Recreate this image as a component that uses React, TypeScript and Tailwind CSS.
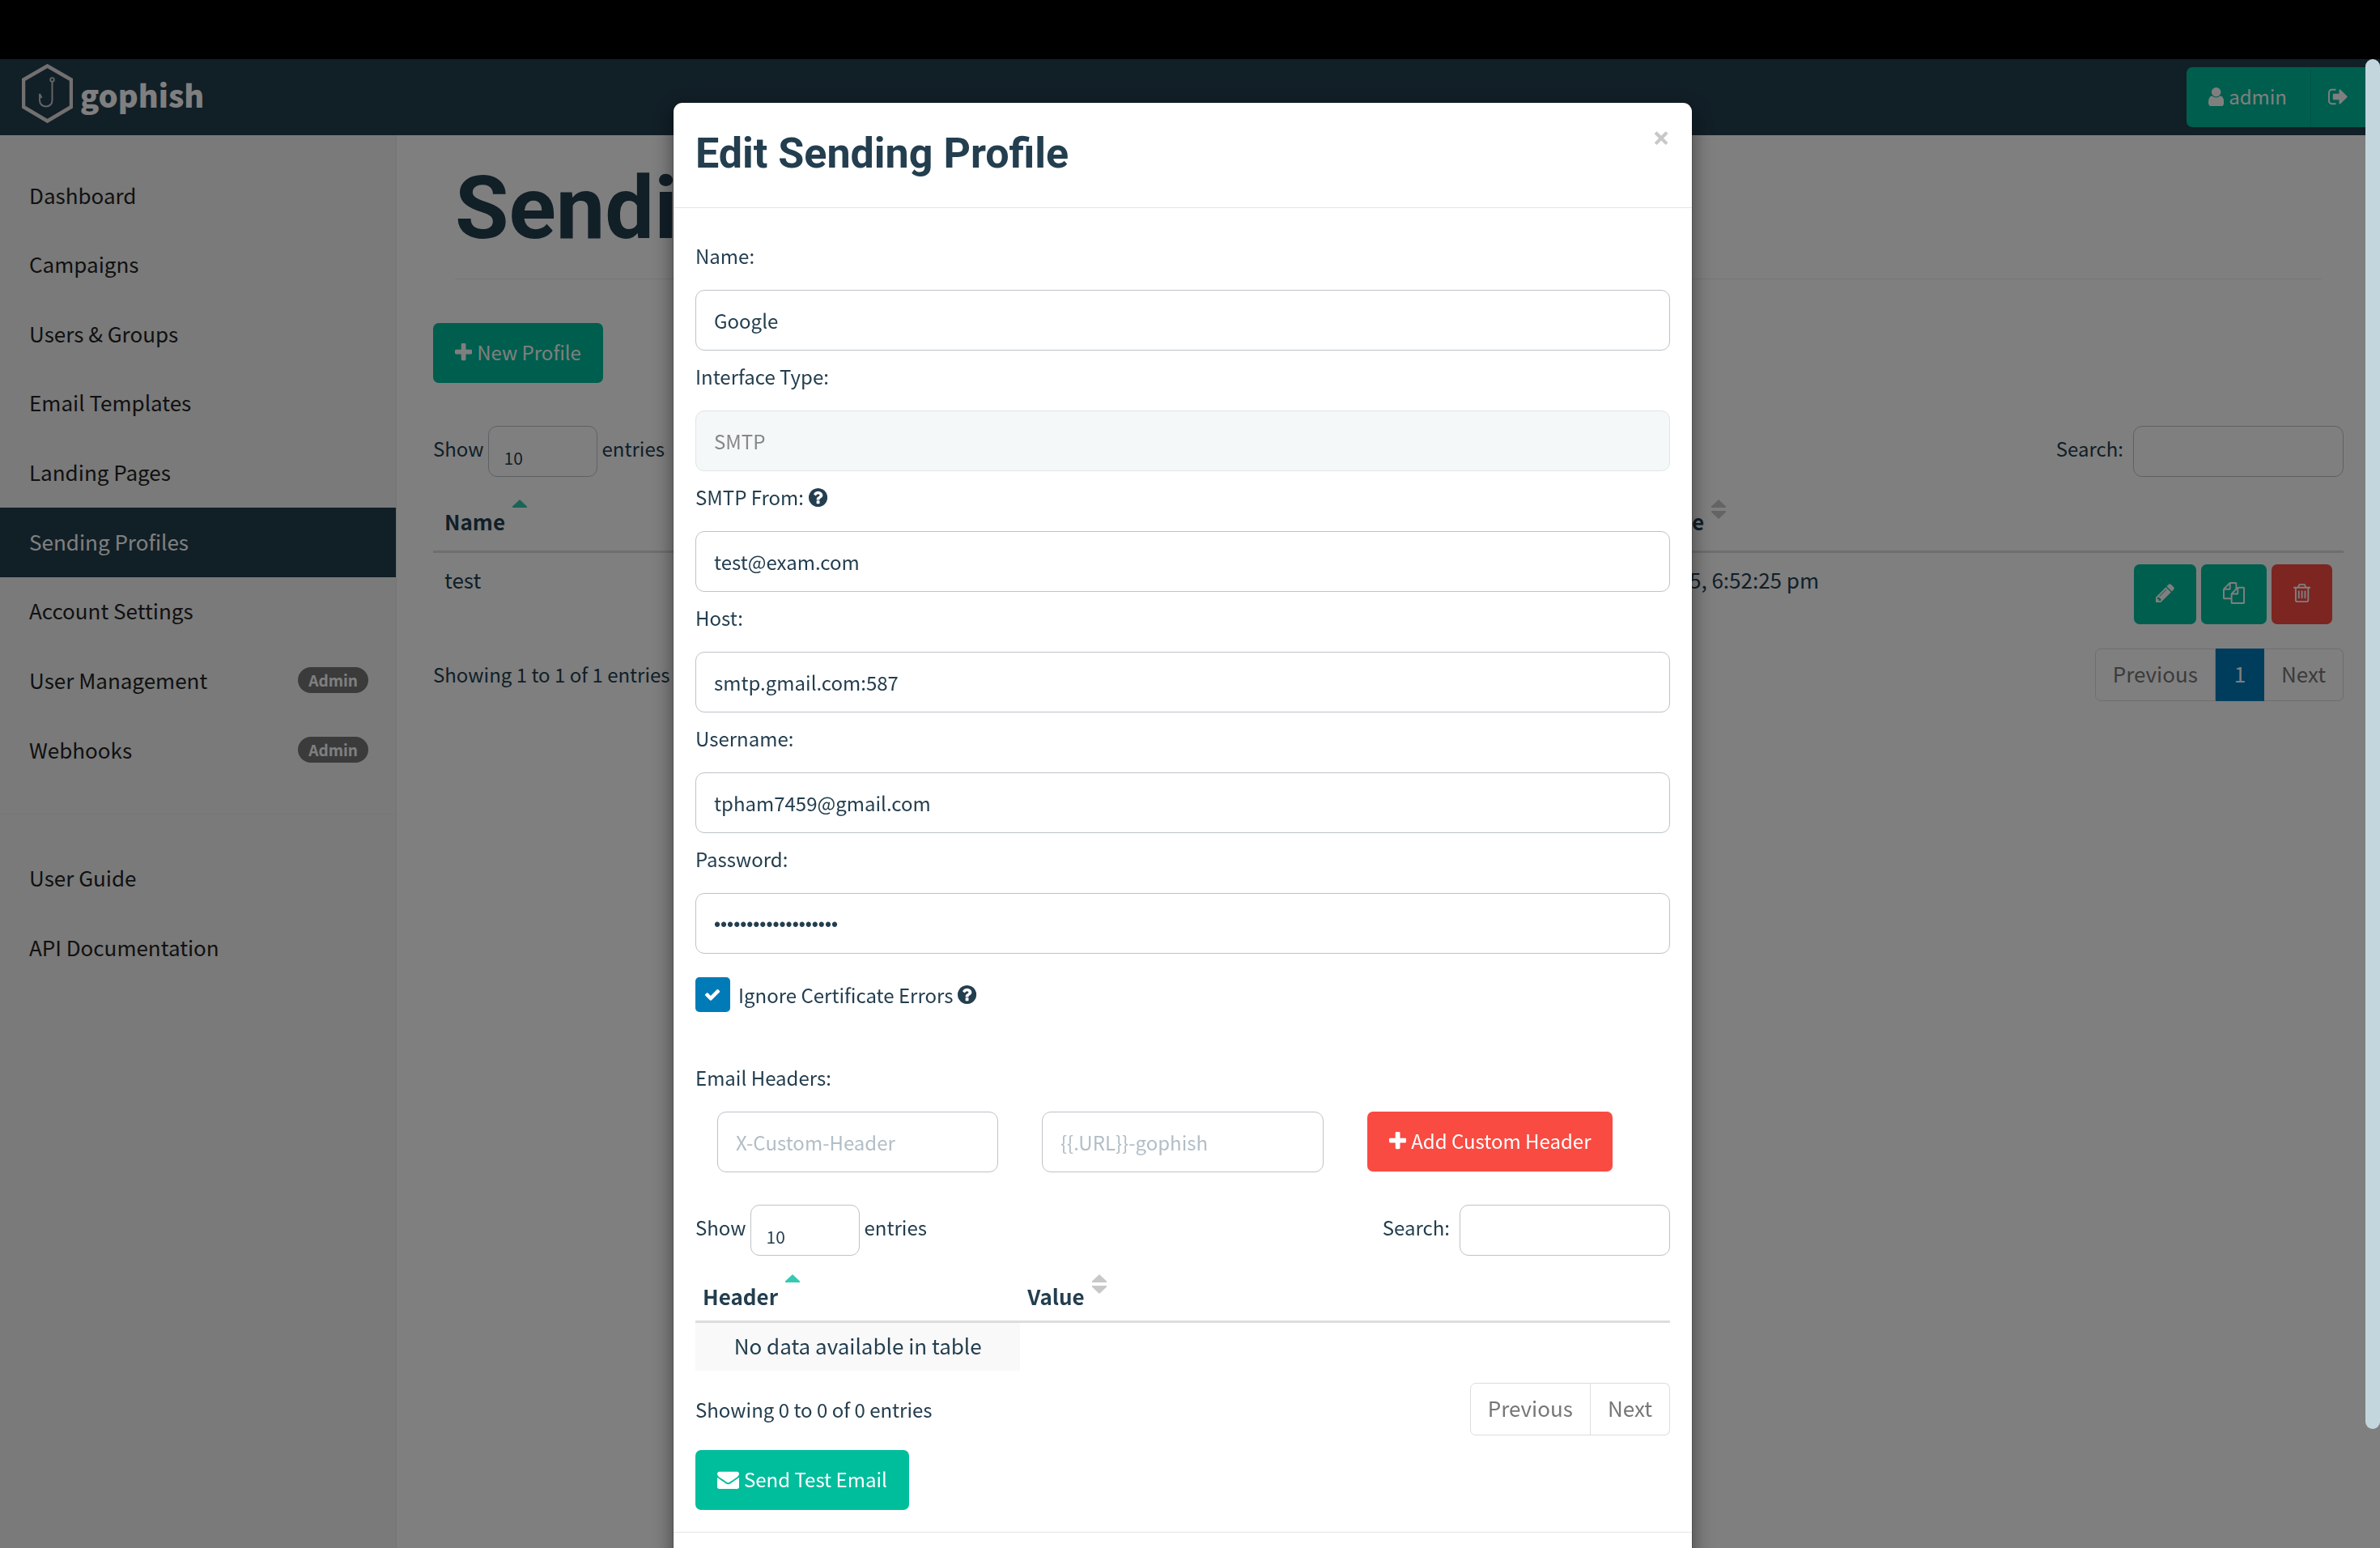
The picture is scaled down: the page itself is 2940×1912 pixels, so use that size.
import type { ReactNode } from "react";

const ICONS = {
  plus: {
    box: "192 0 1408 1792",
    d: "M1600 736v192q0 40-28 68t-68 28h-416v416q0 40-28 68t-68 28h-192q-40 0-68-28t-28-68v-416h-416q-40 0-68-28t-28-68v-192q0-40 28-68t68-28h416v-416q0-40 28-68t68-28h192q40 0 68 28t28 68v416h416q40 0 68 28t28 68z",
  },
  user: {
    box: "256 0 1280 1792",
    d: "M1536 1399q0 109-62.5 187t-150.5 78h-854q-88 0-150.5-78t-62.5-187q0-85 8.5-160.5t31.5-152 58.5-131 94-89 134.5-34.5q131 128 313 128t313-128q76 0 134.5 34.5t94 89 58.5 131 31.5 152 8.5 160.5zm-256-887q0 159-112.5 271.5t-271.5 112.5-271.5-112.5-112.5-271.5 112.5-271.5 271.5-112.5 271.5 112.5 112.5 271.5z",
  },
  signOut: {
    box: "64 0 1664 1792",
    d: "M704 1440q0 4 1 20t.5 26.5-3 23.5-10 19.5-20.5 6.5h-320q-119 0-203.5-84.5t-84.5-203.5v-704q0-119 84.5-203.5t203.5-84.5h320q13 0 22.5 9.5t9.5 22.5q0 4 1 20t.5 26.5-3 23.5-10 19.5-20.5 6.5h-320q-66 0-113 47t-47 113v704q0 66 47 113t113 47h312l11.5 1 11.5 3 8 5.5 7 9 2 13.5zm928-544q0 26-19 45l-544 544q-19 19-45 19t-45-19-19-45v-288h-448q-26 0-45-19t-19-45v-384q0-26 19-45t45-19h448v-288q0-26 19-45t45-19 45 19l544 544q19 19 19 45z",
  },
  pencil: {
    box: "128 0 1536 1792",
    d: "M491 1536l91-91-235-235-91 91v107h128v128h107zm523-928q0-22-22-22-10 0-17 7l-542 542q-7 7-7 17 0 22 22 22 10 0 17-7l542-542q7-7 7-17zm-54-192l416 416-832 832h-416v-416zm683 96q0 53-37 90l-166 166-416-416 166-165q36-38 90-38 53 0 91 38l235 234q37 39 37 91z",
  },
  copy: {
    box: "0 0 1792 1792",
    d: "M1696 384q40 0 68 28t28 68v1216q0 40-28 68t-68 28h-960q-40 0-68-28t-28-68v-288h-544q-40 0-68-28t-28-68v-672q0-40 20-88t48-76l408-408q28-28 76-48t88-20h416q40 0 68 28t28 68v328q68-40 128-40h416zm-544 213l-299 299h299v-299zm-640-384l-299 299h299v-299zm196 647l316-316v-416h-384v416q0 40-28 68t-68 28h-416v640h512v-256q0-40 20-88t48-76zm956 804v-1152h-384v416q0 40-28 68t-68 28h-416v640h896z",
  },
  trash: {
    box: "192 0 1408 1792",
    d: "M704 736v576q0 14-9 23t-23 9h-64q-14 0-23-9t-9-23v-576q0-14 9-23t23-9h64q14 0 23 9t9 23zm256 0v576q0 14-9 23t-23 9h-64q-14 0-23-9t-9-23v-576q0-14 9-23t23-9h64q14 0 23 9t9 23zm256 0v576q0 14-9 23t-23 9h-64q-14 0-23-9t-9-23v-576q0-14 9-23t23-9h64q14 0 23 9t9 23zm128 724v-948h-896v948q0 22 7 40.5t14.5 27 10.5 8.5h832q3 0 10.5-8.5t14.5-27 7-40.5zm-672-1076h448l-48-117q-7-9-17-11h-317q-10 2-17 11zm928 32v64q0 14-9 23t-23 9h-96v948q0 83-47 143.5t-113 60.5h-832q-66 0-113-58.5t-47-141.5v-952h-96q-14 0-23-9t-9-23v-64q0-14 9-23t23-9h309l70-167q15-37 54-63t79-26h320q40 0 79 26t54 63l70 167h309q14 0 23 9t9 23z",
  },
  help: {
    box: "128 0 1536 1792",
    d: "M1024 1376v-192q0-14-9-23t-23-9h-192q-14 0-23 9t-9 23v192q0 14 9 23t23 9h192q14 0 23-9t9-23zm256-672q0-88-55.5-163t-138.5-116-170-41q-243 0-371 213-15 24 8 42l132 100q7 6 19 6 16 0 25-12 53-68 86-92 34-24 86-24 48 0 85.5 26t37.5 59q0 38-20 61t-68 45q-63 28-115.5 86.5t-52.5 125.5v36q0 14 9 23t23 9h192q14 0 23-9t9-23q0-19 21.5-49.5t54.5-49.5q32-18 49-28.5t46-35 44.5-48 28-60.5 12.5-81zm384 192q0 209-103 385.5t-279.5 279.5-385.5 103-385.5-103-279.5-279.5-103-385.5 103-385.5 279.5-279.5 385.5-103 385.5 103 279.5 279.5 103 385.5z",
  },
  check: {
    box: "121 0 1550 1792",
    d: "M1671 566q0 40-28 68l-724 724-136 136q-28 28-68 28t-68-28l-136-136-362-362q-28-28-28-68t28-68l136-136q28-28 68-28t68 28l294 295 656-657q28-28 68-28t68 28l136 136q28 28 28 68z",
  },
  envelope: {
    box: "0 0 1792 1792",
    d: "M1792 710v794q0 66-47 113t-113 47h-1472q-66 0-113-47t-47-113v-794q44 49 101 87 362 246 497 345 57 42 92.5 65.5t94.5 48 110 24.5h2q51 0 110-24.5t94.5-48 92.5-65.5q170-123 498-345 57-39 100-87zm0-294q0 79-49 151t-122 123q-376 261-468 325-10 7-42.5 31t-54 38.5-52 32.5-57.5 27-50 9h-2q-23 0-50-9t-57.5-27-52-32.5-54-38.5-42.5-31q-91-64-262-182.5t-205-142.5q-62-42-117-115.5t-55-136.5q0-78 41.5-130t118.5-52h1472q65 0 112.5 47t47.5 113z",
  },
};

function Icon({ name, className = "h-[27px]" }: { name: keyof typeof ICONS; className?: string }) {
  const { box, d } = ICONS[name];
  return (
    <svg viewBox={box} className={`w-auto shrink-0 ${className}`} fill="currentColor" aria-hidden="true">
      <path d={d} />
    </svg>
  );
}

function SortIcon({ active = false }: { active?: boolean }) {
  return (
    <svg viewBox="0 0 18 24" className="h-6 w-[18px] shrink-0" aria-hidden="true">
      <path d="M9 0 18 8.500V10H0V8.500Z" fill={active ? "#35c9b0" : "#c8c8c8"} />
      {!active && <path d="M9 24 18 15.500V14H0V15.500Z" fill="#c8c8c8" />}
    </svg>
  );
}

function Logo() {
  return (
    <a href="#home" className="flex items-center gap-[9px] pb-2.5 pl-[27px]">
      <svg viewBox="0 0 63 73" className="h-[73px] w-[63px]" fill="none" aria-hidden="true">
        <path d="M31.500 2.500 61 19.500V53L31.500 70.500 2 53V19.500Z" stroke="#e4e1df" strokeWidth="4.500" />
        <circle cx="37.500" cy="19.500" r="2.300" stroke="#c9cbcc" strokeWidth="1.800" />
        <path d="M37.500 22V45c0 10-15.500 10-15.500 0V37l2.500 5" stroke="#c9cbcc" strokeWidth="2" />
      </svg>
      <span className="pt-1 text-[38px] leading-[60px] font-black text-white">gophish</span>
    </a>
  );
}

const NAV = [
  { label: "Dashboard" },
  { label: "Campaigns" },
  { label: "Users & Groups" },
  { label: "Email Templates" },
  { label: "Landing Pages" },
  { label: "Sending Profiles", active: true },
  { label: "Account Settings" },
  { label: "User Management", badge: "Admin" },
  { label: "Webhooks", badge: "Admin" },
];

function NavItem({ label, active, badge }: { label: string; active?: boolean; badge?: string }) {
  return (
    <li className="flex">
      <a
        href="#nav"
        className={`flex flex-1 items-center justify-between pr-[34px] pb-0.5 pl-9 text-[26px] ${active ? "bg-[#233e4f] text-white" : "text-[#222222]"}`}
      >
        {label}
        {badge && (
          <span className="rounded-full bg-[#777777] px-[13px] text-[19px] leading-8 font-bold text-white">{badge}</span>
        )}
      </a>
    </li>
  );
}

const INPUT = "rounded-[11px] border border-[#bdc3c7] bg-white";

function TableTools({ id }: { id: string }) {
  return (
    <div className="flex h-[63px] items-stretch justify-between">
      <label htmlFor={`${id}-length`} className="flex leading-[56px]">
        Show
        <select
          id={`${id}-length`}
          defaultValue="10"
          className={`mr-1.5 ml-[5px] w-[135px] appearance-none pt-3.5 pl-[19px] text-[21px] leading-7 ${INPUT}`}
        >
          <option>10</option>
          <option>25</option>
          <option>50</option>
        </select>
        entries
      </label>
      <label htmlFor={`${id}-search`} className="flex leading-[56px]">
        Search:
        <input id={`${id}-search`} type="search" className={`ml-3 w-[260px] px-5 ${INPUT}`} />
      </label>
    </div>
  );
}

function Pager({ page }: { page?: number }) {
  return (
    <div className="flex h-[65px] text-[26px] text-[#777777]">
      <button type="button" className="rounded-l-[7px] border border-[#dddddd] px-[21px] pb-0.5">Previous</button>
      {page !== undefined && <button type="button" className="w-[60px] bg-[#007bb8] pb-0.5 text-white">{page}</button>}
      <button type="button" className="rounded-r-[7px] border border-l-0 border-[#dddddd] px-[21px] pb-0.5">Next</button>
    </div>
  );
}

function HeadCell({ children, active, pad }: { children: ReactNode; active?: boolean; pad: string }) {
  return (
    <th scope="col" className={`text-left align-bottom text-[26px] font-bold ${pad}`}>
      <span className="flex items-start gap-[9px]">
        <span className="pt-2 leading-[38px]">{children}</span>
        <SortIcon active={active} />
      </span>
    </th>
  );
}

const BUTTON = "flex h-[74px] items-center justify-center gap-1.5 rounded-[7px] px-[27px] pb-0.5 text-white";
const CELL = "px-[14px] py-[14px] align-top text-[26px] leading-[38px]";

function Page() {
  return (
    <div className="flex flex-1 flex-col">
      <header className="flex h-[94px] items-stretch justify-between bg-[#233e4f]">
        <Logo />
        <div className="flex items-center pr-[18px]">
          <button type="button" className="flex h-[74px] items-center gap-1.5 rounded-l-[7px] bg-[#00bd9c] pr-[29px] pb-0.5 pl-[27px] text-white">
            <Icon name="user" />
            admin
          </button>
          <button type="button" aria-label="Sign out" className="flex h-[74px] w-[68px] items-center justify-center border-l border-[#00a98c] bg-[#00bd9c] pb-0.5 text-white">
            <Icon name="signOut" />
          </button>
        </div>
      </header>
      <div className="flex flex-1">
        <nav className="w-[490px] shrink-0 border-r border-[#e8e8e8] bg-[#f5f5f5] pt-8">
          <ul className="grid h-[771px] auto-rows-fr">
            {NAV.map((item) => (
              <NavItem key={item.label} {...item} />
            ))}
          </ul>
          <hr className="mt-[35px] border-[#eeeeee]" />
          <ul className="mt-9 grid h-[172px] auto-rows-fr">
            <NavItem label="User Guide" />
            <NavItem label="API Documentation" />
          </ul>
        </nav>
        <main className="flex-1 pr-[45px] pl-[45px]">
          <h1 className="mx-[27px] border-b border-[#eeeeee] pt-[31px] pb-7 font-[Roboto,sans-serif] text-[108px] leading-[118px] font-bold">
            Sending Profiles
          </h1>
          <button type="button" className={`mt-[54px] mb-[53px] bg-[#00bd9c] ${BUTTON}`}>
            <Icon name="plus" />
            New Profile
          </button>
          <TableTools id="profiles" />
          <table className="w-full table-fixed border-collapse">
            <colgroup>
              <col className="w-[28%]" />
              <col className="w-[27.9%]" />
              <col className="w-[26%]" />
              <col />
            </colgroup>
            <thead>
              <tr className="h-[92px] border-b-[3px] border-[#dddddd]">
                <HeadCell active pad="pl-[14px] pb-[17px]">Name</HeadCell>
                <HeadCell pad="pl-[14px] pb-[17px]">Interface Type</HeadCell>
                <HeadCell pad="pl-[14px] pb-[17px]">Last Modified Date</HeadCell>
                <th aria-label="Actions" />
              </tr>
            </thead>
            <tbody>
              <tr>
                <td className={CELL}>test</td>
                <td className={CELL}>SMTP</td>
                <td className={CELL}>February 12th 2025, 6:52:25 pm</td>
                <td className={CELL}>
                  <div className="flex justify-end gap-1.5">
                    <button type="button" aria-label="Edit" className={`bg-[#00bd9c] ${BUTTON}`}><Icon name="pencil" /></button>
                    <button type="button" aria-label="Copy" className={`bg-[#00bd9c] ${BUTTON}`}><Icon name="copy" /></button>
                    <button type="button" aria-label="Delete" className={`bg-[#f94b42] ${BUTTON}`}><Icon name="trash" /></button>
                  </div>
                </td>
              </tr>
            </tbody>
          </table>
          <div className="mt-4 flex items-center justify-between">
            <p>Showing 1 to 1 of 1 entries</p>
            <Pager page={1} />
          </div>
        </main>
      </div>
    </div>
  );
}

type FieldProps = { id: string; label: string; value: string; type?: string; help?: boolean; disabled?: boolean };

const FIELDS: FieldProps[] = [
  { id: "name", label: "Name:", value: "Google" },
  { id: "interface", label: "Interface Type:", value: "SMTP", disabled: true },
  { id: "from", label: "SMTP From:", value: "test@exam.com", help: true },
  { id: "host", label: "Host:", value: "smtp.gmail.com:587" },
  { id: "username", label: "Username:", value: "tpham7459@gmail.com" },
  { id: "password", label: "Password:", value: "correct-horse-stapl", type: "password" },
];

const LABEL = "flex items-center gap-1.5 pt-[11px] pb-[21px] leading-[42px]";

function Field({ id, label, value, type = "text", help, disabled }: FieldProps) {
  return (
    <div>
      <label htmlFor={id} className={LABEL}>
        {label}
        {help && <Icon name="help" />}
      </label>
      <input
        id={id}
        type={type}
        defaultValue={value}
        disabled={disabled}
        className={`h-[75px] w-full rounded-[11px] border px-[22px] ${disabled ? "border-[#dfe5e5] bg-[#f4f8f9] text-[#888888]" : "border-[#bdc3c7] bg-white"} ${type === "password" ? "pt-1 font-['Liberation_Sans',sans-serif] text-[23px]" : ""}`}
      />
    </div>
  );
}

function EditDialog() {
  return (
    <section
      role="dialog"
      aria-labelledby="dialog-title"
      className="w-[1258px] rounded-[11px] bg-white shadow-[0_9px_27px_rgba(0,0,0,0.5),0_0_0_1px_rgba(0,0,0,0.2)]"
    >
      <div className="flex items-start justify-between border-b border-[#e5e5e5] px-[27px] pt-7 pb-[31px]">
        <h2 id="dialog-title" className="font-[Roboto,sans-serif] text-[52px] leading-[70px] font-bold">
          Edit Sending Profile
        </h2>
        <button type="button" aria-label="Close" className="font-['Open_Sans',sans-serif] text-[38px] leading-7 font-bold text-[#c8c8c8]">
          ×
        </button>
      </div>
      <form className="p-[27px]">
        {FIELDS.map((field) => (
          <Field key={field.id} {...field} />
        ))}
        <div className="mt-[29px] flex h-[43px] items-center gap-2.5">
          <span className="relative flex size-[43px] items-center justify-center rounded-[5px] bg-[#007bb8] text-white">
            <input id="ignore-cert" type="checkbox" defaultChecked className="absolute inset-0 size-full cursor-pointer appearance-none" />
            <Icon name="check" className="h-[21px]" />
          </span>
          <label htmlFor="ignore-cert" className="flex items-center gap-1.5 leading-[42px]">
            Ignore Certificate Errors
            <Icon name="help" />
          </label>
        </div>
        <label htmlFor="header-key" className={`mt-[49px] ${LABEL}`}>Email Headers:</label>
        <div className="mb-10 flex items-start gap-[54px] pl-[27px]">
          <input id="header-key" placeholder="X-Custom-Header" className={`h-[75px] w-[347px] px-[22px] placeholder:text-[#b2bec7] ${INPUT}`} />
          <input aria-label="Header value" placeholder="{{.URL}}-gophish" className={`h-[75px] w-[348px] px-[22px] placeholder:text-[#b2bec7] ${INPUT}`} />
          <button type="button" className={`bg-[#f94b42] ${BUTTON}`}>
            <Icon name="plus" />
            Add Custom Header
          </button>
        </div>
        <TableTools id="headers" />
        <table className="w-full table-fixed border-collapse">
          <colgroup>
            <col className="w-1/3" />
            <col />
          </colgroup>
          <thead>
            <tr className="h-[81px] border-b-[3px] border-[#dddddd]">
              <HeadCell active pad="pl-[9px] pb-[11px]">Header</HeadCell>
              <HeadCell pad="pl-[9px] pb-[11px]">Value</HeadCell>
            </tr>
          </thead>
          <tbody>
            <tr className="h-[61px]">
              <td className="bg-[#f9f9f9] pb-0.5 text-center text-[26px]">No data available in table</td>
              <td />
            </tr>
          </tbody>
        </table>
        <div className="mt-[15px] flex items-center justify-between">
          <p>Showing 0 to 0 of 0 entries</p>
          <Pager />
        </div>
        <button type="button" className={`mt-[18px] bg-[#00bd9c] ${BUTTON}`}>
          <Icon name="envelope" />
          Send Test Email
        </button>
      </form>
      <div className="border-t border-[#e5e5e5] p-[27px]" />
    </section>
  );
}

export default function App() {
  return (
    <div className="flex h-screen flex-col overflow-hidden bg-white font-['Noto_Sans_CJK_SC','Noto_Sans',sans-serif] text-2xl text-[#233e4f]">
      <div className="h-[73px] shrink-0 bg-black" />
      <Page />
      <div className="fixed inset-x-0 top-[73px] bottom-0 flex items-start overflow-hidden bg-black/50">
        <div className="flex flex-1 justify-center pt-[54px]">
          <EditDialog />
        </div>
        <div className="h-full w-[18px]">
          <div className="h-[92%] rounded-full bg-[#c3d6de]" />
        </div>
      </div>
    </div>
  );
}
